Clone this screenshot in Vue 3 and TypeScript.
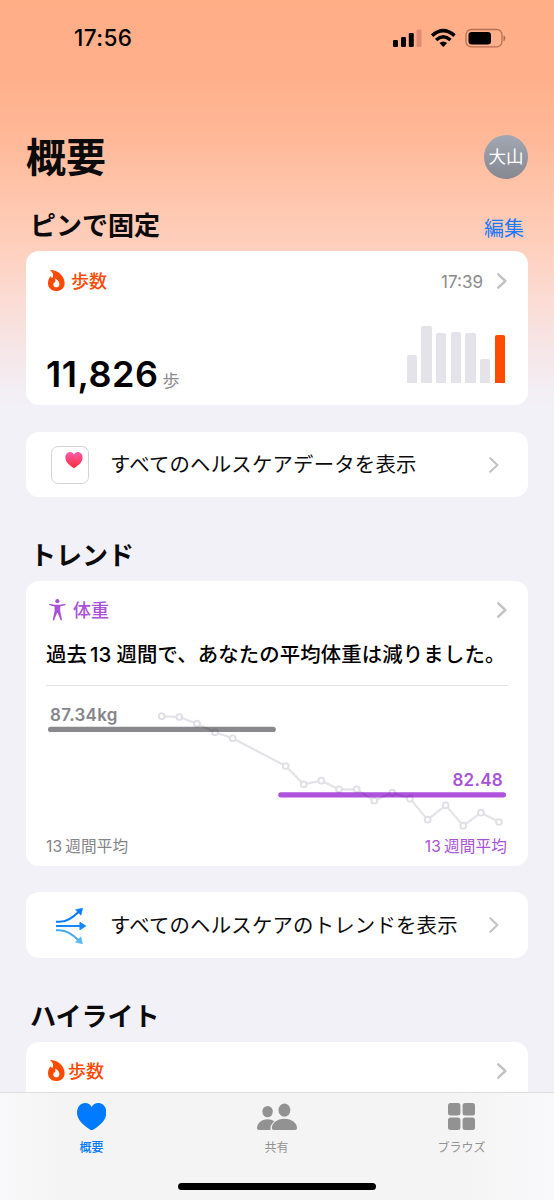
<script setup lang="ts">
interface Point { x: number; y: number }
interface Bar { height: number; current?: boolean }

const bars: Bar[] = [
  { height: 27.7 }, { height: 56.7 }, { height: 49.7 }, { height: 50.7 },
  { height: 49.7 }, { height: 24.3 }, { height: 48, current: true },
]

const points: Point[] = [
  { x: 161.7, y: 716.3 }, { x: 179.3, y: 717 }, { x: 197, y: 723.7 }, { x: 215, y: 732.3 },
  { x: 232.7, y: 738.3 }, { x: 285.7, y: 766 }, { x: 303.7, y: 784.3 }, { x: 321.3, y: 780.7 },
  { x: 339, y: 789.3 }, { x: 356.7, y: 789.3 }, { x: 374.3, y: 800.7 }, { x: 392.3, y: 792.7 },
  { x: 410, y: 798.7 }, { x: 427.7, y: 819.7 }, { x: 445.7, y: 805.3 }, { x: 463.3, y: 825.7 },
  { x: 481, y: 812.7 }, { x: 499, y: 822 },
]
const line = points.map((p) => `${p.x},${p.y}`).join(' ')

const flame = 'M2.3.6C1.9.1 2.5 0 3.2 0C10.5.4 16.6 6.4 16.6 13.2C16.6 18 13.2 21 8.2 21C3.4 21 0 17.9 0 13.3C0 10.4 1 8.1 2.2 6.7C2.7 6.2 3.1 6.9 3.5 7.5C3.8 8 4.4 8 4.7 7.4C5.9 5 4.8 2.6 2.3.6ZM7.2 9C7.7 10.8 7.3 11.7 6.9 12.3C6.7 12.7 6.3 12.6 6.1 12.2C5.6 12.7 5.3 13.5 5.3 14.4C5.3 16.2 6.5 17.3 8.3 17.3C10.2 17.3 11.4 16.1 11.4 14.2C11.4 12 9.7 9.9 7.7 8.8C7.3 8.6 7.1 8.7 7.2 9Z'
const heart = 'M14.7 27.3C14.3 27.3 13.8 27 13.3 26.7C5.2 21.6 0 16.3 0 9.5C0 4.1 3.5 0 8.2 0C11.1 0 13.4 1.5 14.7 4.1C16 1.5 18.3 0 21.2 0C25.9 0 29.4 4.1 29.4 9.5C29.4 16.3 24.2 21.6 16.1 26.7C15.6 27 15.1 27.3 14.7 27.3Z'
</script>

<template>
  <div class="screen">
    <header class="status">
      <span class="clock">17:56</span>
      <svg class="status-icons" viewBox="393 27 113 21">
        <rect x="393" y="39" width="5" height="7" rx="1.3" />
        <rect x="401" y="36" width="5" height="10" rx="1.3" />
        <rect x="408.8" y="32" width="5" height="14" rx="1.3" />
        <rect x="416.5" y="28.5" width="5" height="17.5" rx="1.3" fill="#df8c74" />
        <g fill="none" stroke="#000" stroke-width="3.5">
          <path d="M432.1 34.6Q443.3 24.6 454.5 34.6" />
          <path d="M436.1 39Q443.3 32.6 450.5 39" />
        </g>
        <path d="M439.5 42.1Q443.3 39.1 447.1 42.1L443.9 45.4Q443.3 46 442.7 45.4Z" />
        <rect x="466" y="28.5" width="36" height="17.3" rx="5.2" fill="none" stroke="#b57255" stroke-width="1.3" />
        <rect x="468.5" y="31" width="22.5" height="12.4" rx="3.2" />
        <path d="M503.5 34.2Q505.3 34.8 505.3 37.2T503.5 40.2Z" fill="#aa6b52" />
      </svg>
    </header>

    <main class="content">
      <div class="title-row">
        <h1>概要</h1>
        <div class="avatar">大山</div>
      </div>

      <div class="section-head first">
        <h2>ピンで固定</h2>
        <a class="edit">編集</a>
      </div>
      <section class="card steps">
        <div class="card-head orange">
          <svg class="flame" viewBox="0 0 17 21"><path :d="flame" fill-rule="evenodd" /></svg>
          <span class="label">歩数</span>
          <span class="time">17:39</span>
          <svg class="chevron" viewBox="0 0 10 16"><path d="M1.3 1.3L8.3 8L1.3 14.7" /></svg>
        </div>
        <div class="steps-body">
          <div class="value"><strong>11,826</strong><span>歩</span></div>
          <div class="bars">
            <i v-for="(b, i) in bars" :key="i" :class="{ current: b.current }" :style="{ height: b.height + 'px' }"></i>
          </div>
        </div>
      </section>

      <section class="card link">
        <div class="app-icon">
          <svg viewBox="0 0 29.4 27.3">
            <defs><linearGradient id="pink" x1="0" y1="0" x2="0" y2="1"><stop offset="0" stop-color="#fa5cac" /><stop offset="1" stop-color="#fd2d3b" /></linearGradient></defs>
            <path :d="heart" fill="url(#pink)" />
          </svg>
        </div>
        <span class="link-text">すべてのヘルスケアデータを表示</span>
        <svg class="chevron thin" viewBox="0 0 10 16"><path d="M1.3 1.3L8.3 8L1.3 14.7" /></svg>
      </section>

      <div class="section-head trend-title"><h2>トレンド</h2></div>
      <section class="card trend">
        <div class="card-head purple">
          <svg class="person" viewBox="49 599 17 22">
            <circle cx="57.4" cy="601.2" r="2.1" />
            <path d="M49.7 603.9L55.2 604.7Q57.4 605 59.6 604.7L65.1 603.9Q65.9 603.9 65.8 604.6Q65.8 605 65.2 605.2L60.2 606.5L60.2 611L62 619.5Q62.1 620.3 61.4 620.4Q60.8 620.5 60.6 619.9L57.8 612.9H57L54.2 619.9Q54 620.5 53.4 620.4Q52.7 620.3 52.8 619.5L54.6 611V606.5L49.6 605.2Q49 605 49 604.6Q49 603.9 49.7 603.9Z" />
          </svg>
          <span class="label">体重</span>
          <svg class="chevron" viewBox="0 0 10 16"><path d="M1.3 1.3L8.3 8L1.3 14.7" /></svg>
        </div>
        <p class="summary">過去<span class="num">13</span>週間で、あなたの平均体重は減りました。</p>
        <div class="chart">
          <svg viewBox="46 700 462 132">
            <line x1="50.6" y1="729.4" x2="273.2" y2="729.4" stroke="#8a8a8e" stroke-width="5.2" stroke-linecap="round" />
            <line x1="280.8" y1="794.8" x2="503.4" y2="794.8" stroke="#af52de" stroke-width="5.2" stroke-linecap="round" />
            <g class="series">
              <polyline :points="line" fill="none" stroke="#e4e3e9" stroke-width="2.2" />
              <circle v-for="p in points" :key="p.x" :cx="p.x" :cy="p.y" r="2.9" fill="#fff" stroke="#e0dfe6" stroke-width="1.9" />
            </g>
          </svg>
          <span class="before">87.34kg</span>
          <span class="after">82.48</span>
        </div>
        <div class="captions">
          <span><span class="num">13</span>週間平均</span>
          <span class="purple"><span class="num">13</span>週間平均</span>
        </div>
      </section>

      <section class="card link">
        <svg class="arrows" viewBox="56 906 31 37">
          <g fill="none" stroke-width="2.1">
            <path d="M56 920.8H59.5C67 920.8 73 916.5 79 910.4" stroke="#087cff" />
            <path d="M56 925H81" stroke="#1688f5" />
            <path d="M56 929.2H59.5C67 929.2 73 933.6 79 939.7" stroke="#45a9ef" />
          </g>
          <path d="M82.6 907.2L80.9 914.2L75.5 908.7Z" fill="#087cff" stroke="#087cff" stroke-width=".6" stroke-linejoin="round" />
          <path d="M86 925L79.8 921.1V928.9Z" fill="#1688f5" stroke="#1688f5" stroke-width=".6" stroke-linejoin="round" />
          <path d="M82.4 942.7L75.5 941.2L80.9 935.7Z" fill="#5ab9f2" stroke="#5ab9f2" stroke-width=".6" stroke-linejoin="round" />
        </svg>
        <span class="link-text">すべてのヘルスケアのトレンドを表示</span>
        <svg class="chevron thin" viewBox="0 0 10 16"><path d="M1.3 1.3L8.3 8L1.3 14.7" /></svg>
      </section>

      <div class="section-head highlight-title"><h2>ハイライト</h2></div>
      <section class="card highlight">
        <div class="card-head orange">
          <svg class="flame" viewBox="0 0 17 21"><path :d="flame" fill-rule="evenodd" /></svg>
          <span class="label">歩数</span>
          <svg class="chevron" viewBox="0 0 10 16"><path d="M1.3 1.3L8.3 8L1.3 14.7" /></svg>
        </div>
      </section>
    </main>

    <footer class="tabbar">
      <nav>
        <a class="tab active">
          <svg class="tab-heart" viewBox="0 0 29.4 27.3"><path :d="heart" /></svg>
          <span>概要</span>
        </a>
        <a class="tab">
          <svg class="tab-people" viewBox="257 1103 40 28">
            <ellipse cx="267.6" cy="1111.6" rx="5.2" ry="5.7" />
            <path d="M258.8 1130Q257 1130 257 1128.2C257 1123.5 261.5 1119.2 267.6 1119.2C270.3 1119.2 272.6 1120 274.3 1121.3C271.8 1123.5 270.4 1126 270.4 1128.4Q270.4 1129.3 270.8 1130Z" />
            <ellipse cx="284.4" cy="1110.2" rx="5.9" ry="6.6" />
            <path d="M273.8 1130Q271.8 1130 271.8 1128C271.8 1123.2 277 1118.8 284.4 1118.8S297 1123.2 297 1128Q297 1130 295 1130Z" />
          </svg>
          <span>共有</span>
        </a>
        <a class="tab">
          <svg class="tab-grid" viewBox="0 0 27 27">
            <rect width="12.4" height="12.4" rx="2.5" /><rect x="14.6" width="12.4" height="12.4" rx="2.5" />
            <rect y="14.6" width="12.4" height="12.4" rx="2.5" /><rect x="14.6" y="14.6" width="12.4" height="12.4" rx="2.5" />
          </svg>
          <span>ブラウズ</span>
        </a>
      </nav>
      <div class="home"></div>
    </footer>
  </div>
</template>

<style>
body { overflow: hidden; }
</style>

<style scoped>
* { box-sizing: border-box; }
.screen {
  position: relative; width: 554px; height: 1200px; overflow: hidden; color: #0b0b0b;
  font-family: Inter, "Noto Sans CJK JP", sans-serif;
  background: linear-gradient(180deg, #ffae86 0, #ffb08b 80px, #ffb796 130px, #ffc4aa 190px, #fed0be 250px, #fbdcd4 300px, #f6e6e7 350px, #f2f1f7 405px);
}
svg { display: block; flex: none; }
h1, h2, p { margin: 0; }
.status { height: 76px; padding: 0 48px 0 74px; display: flex; align-items: center; }
.clock { font-size: 22.5px; font-weight: 550; line-height: 28px; letter-spacing: .4px; color: #000; }
.status-icons { width: 113px; height: 21px; margin-left: auto; }
.content { padding: 0 26px; }
.title-row { height: 114px; padding-top: 59px; display: flex; justify-content: space-between; align-items: flex-start; }
h1 { font-size: 40px; line-height: 44px; font-weight: 700; padding-top: 1px; }
.avatar { width: 44px; height: 44px; border-radius: 50%; background: linear-gradient(#a2a7b3, #858891); color: #fff; font-size: 17.5px; font-weight: 400; line-height: 44px; text-align: center; }
.section-head { display: flex; justify-content: space-between; align-items: center; padding: 0 4px; }
.section-head.first { height: 61px; padding-top: 10px; }
h2 { font-size: 26px; line-height: 32px; font-weight: 700; }
.edit { font-size: 20px; line-height: 26px; color: #1a7af8; margin-top: 6px; }
.card { background: #fff; border-radius: 13px; }
.card-head { display: flex; align-items: center; height: 22px; }
.label { font-size: 18px; line-height: 22px; font-weight: 500; padding-top: 2px; }
.orange { color: #fd4a02; fill: currentColor; }
.purple { color: #a951d9; fill: currentColor; }
.flame { width: 17px; height: 21px; margin: -2px 6px 0 0; }
.person { width: 17px; height: 22px; margin-right: 7px; }
.chevron { width: 10px; height: 16px; margin-left: auto; fill: none; stroke: #c3c3c7; stroke-width: 2.5; stroke-linecap: round; stroke-linejoin: round; }
.chevron.thin { stroke-width: 2.1; }
.time { margin-left: auto; font-size: 17px; color: #8a8a8e; padding-top: 1px; }
.time + .chevron { margin-left: 14px; }
.steps { height: 154px; padding: 19px 21px 0 22px; }
.steps-body { display: flex; justify-content: space-between; }
.value { padding-top: 60px; display: flex; align-items: baseline; white-space: nowrap; height: 110px; line-height: 44px; margin-left: -2px; }
.value strong { font-size: 36px; font-weight: 600; letter-spacing: .5px; color: #000; }
.value span { font-size: 17px; color: #8a8a8e; margin-left: 4px; }
.bars { display: flex; align-items: flex-end; gap: 4.4px; height: 91px; margin-right: 2px; }
.bars i { width: 10.3px; background: #e4e3ea; border-radius: 2px 2px 0 0; }
.bars .current { background: #ff4b00; }
.link { height: 65px; margin-top: 27px; display: flex; align-items: center; padding: 0 29px 0 25px; }
.app-icon { width: 38px; height: 38px; border: 1px solid #d4d4d6; border-radius: 7px; padding: 5px 0 0 13px; margin-right: 21px; }
.app-icon svg { width: 18px; height: 16px; }
.link-text { font-size: 20.4px; line-height: 28px; letter-spacing: .2px; white-space: nowrap; padding-top: 1px; }
.trend-title { height: 84px; padding-top: 33px; }
.trend { height: 285px; padding: 18px 21px 0; }
.trend .card-head { padding-left: 2px; }
.summary { font-size: 20.4px; line-height: 28px; font-weight: 500; letter-spacing: .12px; margin: 20px 0 0 -1px; white-space: nowrap; color: #000; }
.summary .num { margin: 0 5px 0 3px; }
.chart { position: relative; margin: 16px 0 0 -1px; border-top: 1.5px solid #e4e4e7; height: 149px; width: 462px; }
.chart svg { position: absolute; left: 0; top: 14px; width: 462px; height: 132px; isolation: isolate; }
.series { mix-blend-mode: multiply; }
.before, .after { position: absolute; font-size: 17px; line-height: 20px; font-weight: 600; letter-spacing: .3px; }
.before { left: 4px; top: 19px; color: #858589; }
.after { right: 5px; top: 84px; color: #a951d9; }
.captions { display: flex; justify-content: space-between; font-size: 15.6px; line-height: 22px; color: #858589; padding-top: 2px; letter-spacing: .15px; margin-left: -1px; }
.captions .num { margin-right: 3px; }
.captions .purple { color: #a951d9; }
.arrows { width: 31px; height: 37px; margin: 0 23px 0 5px; }
.trend + .link { margin-top: 26px; height: 66px; }
.highlight-title { height: 84px; padding-top: 33px; }
.highlight { height: 90px; padding: 18px 21px 0 22px; }
.highlight .flame { margin-right: 3px; }
.tabbar { position: absolute; left: 0; right: 0; bottom: 0; height: 108px; border-top: 1.5px solid #dededf; background: linear-gradient(90deg, #f9f9fb 0, #f4f4f4 60px, #f4f4f4 460px, #f9f9fb); }
nav { display: flex; width: 555px; margin-left: -1px; height: 90px; }
.tab { flex: 1; display: flex; flex-direction: column; align-items: center; padding-top: 10px; color: #929292; fill: currentColor; font-size: 12px; line-height: 16px; }
.tab span { margin-top: auto; margin-bottom: 27px; }
.tab.active { color: #007aff; font-weight: 500; }
.tab-heart { width: 29.4px; height: 27.3px; }
.tab-people { width: 40px; height: 28px; }
.tab-grid { width: 27px; height: 27px; }
.home { position: absolute; left: 178px; bottom: 10px; width: 198px; height: 7px; border-radius: 4px; background: #000; }
</style>
